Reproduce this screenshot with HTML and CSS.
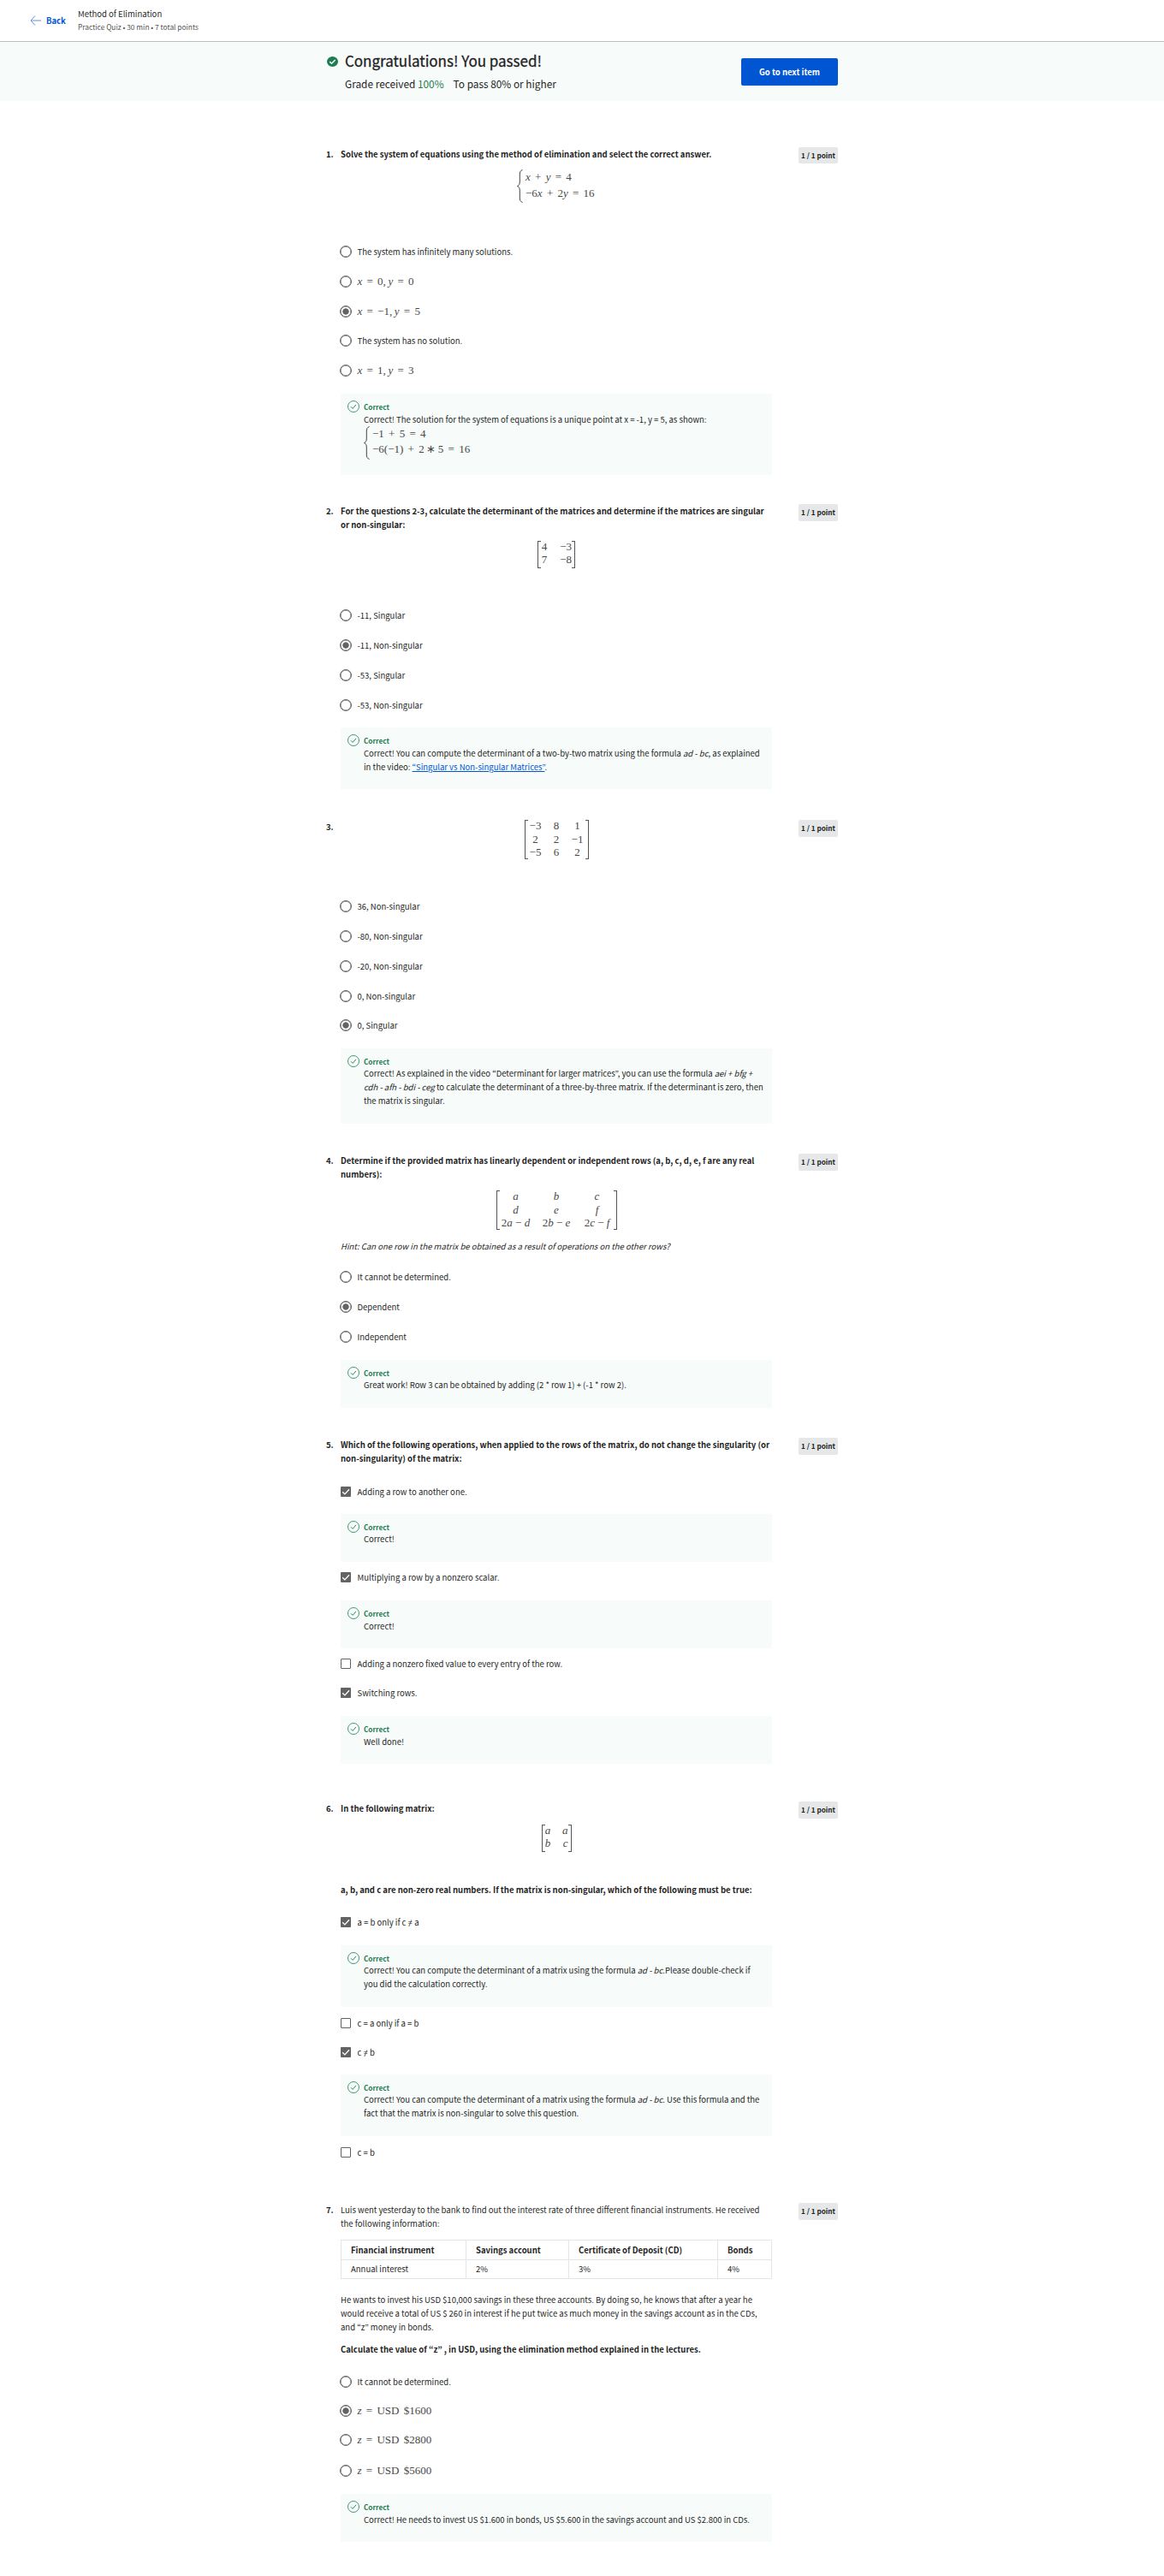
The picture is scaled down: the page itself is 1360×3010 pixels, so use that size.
FILE: index.html
```html
<!DOCTYPE html>
<html lang="en">
<head>
<meta charset="utf-8">
<title>Method of Elimination</title>
<link rel="stylesheet" href="styles.css">
</head>
<body>
<svg class="defs" width="0" height="0" aria-hidden="true">
  <symbol id="ok" viewBox="0 0 14 14"><circle cx="7" cy="7" r="6.5" fill="none" stroke="#1d7c50" stroke-width=".8"/><path d="M4 7.3l2.1 2.1L10 4.9" fill="none" stroke="#1d7c50" stroke-width=".9"/></symbol>
  <symbol id="brace" viewBox="0 0 7 39"><path d="M6.500.5C4 1.500 3.300 3 3.300 6v8c0 3-.5 4.500-2.800 5.500 2.300 1 2.800 2.500 2.800 5.500v8c0 3 .7 4.500 3.200 5.500" fill="none" stroke="#444" stroke-width="1"/></symbol>
  <symbol id="tick" viewBox="0 0 12 12"><path d="M2.200 6.200l2.700 2.700L10 3.200" fill="none" stroke="#fff" stroke-width="1.300"/></symbol>
</svg>

<header class="topbar">
  <a class="back"><svg width="13" height="12" viewBox="0 0 13 12"><path d="M6 .5L1 6l5 5.500M1 6h12" fill="none" stroke="#5b92e4" stroke-width="1"/></svg>Back</a>
  <div class="heading">
    <div class="name">Method of Elimination</div>
    <div class="meta">Practice Quiz • 30 min • 7 total points</div>
  </div>
</header>

<section class="banner">
  <div class="banner-inner">
    <svg class="passed" width="13" height="12" viewBox="0 0 13 12"><ellipse cx="6.500" cy="6" rx="6.500" ry="6" fill="#1d7c50"/><path d="M3.300 6.100l2.200 2.100 4.200-4.300" fill="none" stroke="#fff" stroke-width="1.500"/></svg>
    <div class="result">
      <h1>Congratulations! You passed!</h1>
      <p><span>Grade received <b class="grade">100%</b></span><span>To pass 80% or higher</span></p>
    </div>
    <button class="next">Go to next item</button>
  </div>
</section>

<main>
<section class="question q1">
  <div class="num">1.</div>
  <div class="body">
    <p class="prompt">Solve the system of equations using the method of elimination and select the correct answer.</p>
    <div class="cases"><svg width="7" height="39"><use href="#brace"/></svg><div class="math"><div><i>x</i> + <i>y</i> = 4</div><div>−6<i>x</i> + 2<i>y</i> = 16</div></div></div>
    <div class="options">
      <div class="option"><span class="radio"></span>The system has infinitely many solutions.</div>
      <div class="option"><span class="radio"></span><span class="math"><i>x</i> = 0,&thinsp;<i>y</i> = 0</span></div>
      <div class="option"><span class="radio on"></span><span class="math"><i>x</i> = −1,&thinsp;<i>y</i> = 5</span></div>
      <div class="option"><span class="radio"></span>The system has no solution.</div>
      <div class="option"><span class="radio"></span><span class="math"><i>x</i> = 1,&thinsp;<i>y</i> = 3</span></div>
    </div>
    <div class="feedback loose">
      <svg class="ok" width="14" height="14"><use href="#ok"/></svg>
      <div><h4>Correct</h4>
      <p>Correct! The solution for the system of equations is a unique point at x = -1, y = 5, as shown:</p>
      <div class="cases"><svg width="7" height="39"><use href="#brace"/></svg><div class="math"><div>−1 + 5 = 4</div><div>−6(−1) + 2&thinsp;∗&thinsp;5 = 16</div></div></div></div>
    </div>
  </div>
  <div class="points">1 / 1 point</div>
</section>

<section class="question q2">
  <div class="num">2.</div>
  <div class="body">
    <p class="prompt">For the questions 2-3, calculate the determinant of the matrices and determine if the matrices are singular<br>or non-singular:</p>
    <div class="matrix m2"><span>4</span><span>−3</span><span>7</span><span>−8</span></div>
    <div class="options">
      <div class="option"><span class="radio"></span>-11, Singular</div>
      <div class="option"><span class="radio on"></span>-11, Non-singular</div>
      <div class="option"><span class="radio"></span>-53, Singular</div>
      <div class="option"><span class="radio"></span>-53, Non-singular</div>
    </div>
    <div class="feedback loose">
      <svg class="ok" width="14" height="14"><use href="#ok"/></svg>
      <div><h4>Correct</h4>
      <p>Correct! You can compute the determinant of a two-by-two matrix using the formula <em>ad - bc</em>, as explained<br>in the video: <a class="link">“Singular vs Non-singular Matrices”</a>.</p></div>
    </div>
  </div>
  <div class="points">1 / 1 point</div>
</section>

<section class="question q3">
  <div class="num">3.</div>
  <div class="body">
    <div class="matrix m3"><span>−3</span><span>8</span><span>1</span><span>2</span><span>2</span><span>−1</span><span>−5</span><span>6</span><span>2</span></div>
    <div class="options">
      <div class="option"><span class="radio"></span>36, Non-singular</div>
      <div class="option"><span class="radio"></span>-80, Non-singular</div>
      <div class="option"><span class="radio"></span>-20, Non-singular</div>
      <div class="option"><span class="radio"></span>0, Non-singular</div>
      <div class="option"><span class="radio on"></span>0, Singular</div>
    </div>
    <div class="feedback">
      <svg class="ok" width="14" height="14"><use href="#ok"/></svg>
      <div><h4>Correct</h4>
      <p>Correct! As explained in the video “Determinant for larger matrices”, you can use the formula <em>aei + bfg +<br>cdh - afh - bdi - ceg</em> to calculate the determinant of a three-by-three matrix. If the determinant is zero, then<br>the matrix is singular.</p></div>
    </div>
  </div>
  <div class="points">1 / 1 point</div>
</section>

<section class="question q4">
  <div class="num">4.</div>
  <div class="body">
    <p class="prompt">Determine if the provided matrix has linearly dependent or independent rows (a, b, c, d, e, f are any real<br>numbers):</p>
    <div class="matrix m4"><i>a</i><i>b</i><i>c</i><i>d</i><i>e</i><i>f</i><span>2<i>a</i> − <i>d</i></span><span>2<i>b</i> − <i>e</i></span><span>2<i>c</i> − <i>f</i></span></div>
    <p class="hint"><em>Hint: Can one row in the matrix be obtained as a result of operations on the other rows?</em></p>
    <div class="options">
      <div class="option"><span class="radio"></span>It cannot be determined.</div>
      <div class="option"><span class="radio on"></span>Dependent</div>
      <div class="option"><span class="radio"></span>Independent</div>
    </div>
    <div class="feedback">
      <svg class="ok" width="14" height="14"><use href="#ok"/></svg>
      <div><h4>Correct</h4><p>Great work! Row 3 can be obtained by adding (2 * row 1) + (-1 * row 2).</p></div>
    </div>
  </div>
  <div class="points">1 / 1 point</div>
</section>

<section class="question q5">
  <div class="num">5.</div>
  <div class="body">
    <p class="prompt">Which of the following operations, when applied to the rows of the matrix, do not change the singularity (or<br>non-singularity) of the matrix:</p>
    <div class="options">
      <div class="option"><span class="box on"><svg width="12" height="12"><use href="#tick"/></svg></span>Adding a row to another one.</div>
      <div class="feedback">
        <svg class="ok" width="14" height="14"><use href="#ok"/></svg>
        <div><h4>Correct</h4><p>Correct!</p></div>
      </div>
      <div class="option"><span class="box on"><svg width="12" height="12"><use href="#tick"/></svg></span>Multiplying a row by a nonzero scalar.</div>
      <div class="feedback loose">
        <svg class="ok" width="14" height="14"><use href="#ok"/></svg>
        <div><h4>Correct</h4><p>Correct!</p></div>
      </div>
      <div class="option"><span class="box"></span>Adding a nonzero fixed value to every entry of the row.</div>
      <div class="option"><span class="box on"><svg width="12" height="12"><use href="#tick"/></svg></span>Switching rows.</div>
      <div class="feedback loose">
        <svg class="ok" width="14" height="14"><use href="#ok"/></svg>
        <div><h4>Correct</h4><p>Well done!</p></div>
      </div>
    </div>
  </div>
  <div class="points">1 / 1 point</div>
</section>

<section class="question q6">
  <div class="num">6.</div>
  <div class="body">
    <p class="prompt">In the following matrix:</p>
    <div class="matrix m6"><i>a</i><i>a</i><i>b</i><i>c</i></div>
    <p class="prompt">a, b, and c are non-zero real numbers. If the matrix is non-singular, which of the following must be true:</p>
    <div class="options">
      <div class="option"><span class="box on"><svg width="12" height="12"><use href="#tick"/></svg></span><span>a = b only if c <span class="ne">≠</span> a</span></div>
      <div class="feedback">
        <svg class="ok" width="14" height="14"><use href="#ok"/></svg>
        <div><h4>Correct</h4><p>Correct! You can compute the determinant of a matrix using the formula <em>ad - bc</em>.Please double-check if<br>you did the calculation correctly.</p></div>
      </div>
      <div class="option short"><span class="box"></span>c = a only if a = b</div>
      <div class="option short"><span class="box on"><svg width="12" height="12"><use href="#tick"/></svg></span><span>c <span class="ne">≠</span> b</span></div>
      <div class="feedback">
        <svg class="ok" width="14" height="14"><use href="#ok"/></svg>
        <div><h4>Correct</h4><p>Correct! You can compute the determinant of a matrix using the formula <em>ad - bc</em>. Use this formula and the<br>fact that the matrix is non-singular to solve this question.</p></div>
      </div>
      <div class="option"><span class="box"></span>c = b</div>
    </div>
  </div>
  <div class="points">1 / 1 point</div>
</section>

<section class="question q7">
  <div class="num">7.</div>
  <div class="body">
    <p>Luis went yesterday to the bank to find out the interest rate of three different financial instruments. He received<br>the following information:</p>
    <table>
      <tr><th class="c1">Financial instrument</th><th class="c2">Savings account</th><th class="c3">Certificate of Deposit (CD)</th><th>Bonds</th></tr>
      <tr><td>Annual interest</td><td>2%</td><td>3%</td><td>4%</td></tr>
    </table>
    <p>He wants to invest his USD $10,000 savings in these three accounts. By doing so, he knows that after a year he<br>would receive a total of US $ 260 in interest if he put twice as much money in the savings account as in the CDs,<br>and “z” money in bonds.</p>
    <p class="prompt ask">Calculate the value of “z” , in USD, using the elimination method explained in the lectures.</p>
    <div class="options">
      <div class="option"><span class="radio"></span>It cannot be determined.</div>
      <div class="option"><span class="radio on"></span><span class="math"><i>z</i> = USD $1600</span></div>
      <div class="option"><span class="radio"></span><span class="math"><i>z</i> = USD $2800</span></div>
      <div class="option"><span class="radio"></span><span class="math"><i>z</i> = USD $5600</span></div>
    </div>
    <div class="feedback loose">
      <svg class="ok" width="14" height="14"><use href="#ok"/></svg>
      <div><h4>Correct</h4><p>Correct! He needs to invest US $1.600 in bonds, US $5.600 in the savings account and US $2.800 in CDs.</p></div>
    </div>
  </div>
  <div class="points">1 / 1 point</div>
</section>
</main>
</body>
</html>
```
FILE: styles.css
```css
* { box-sizing: border-box; }
body {
  margin: 0;
  width: 1360px;
  height: 3010px;
  overflow: hidden;
  background: #fff;
  color: #1f1f1f;
  font: 9.53px/16px "Noto Sans CJK KR", sans-serif;
  white-space: nowrap;
}
p, h1, h4 { margin: 0; font-size: inherit; }
svg { display: block; flex: none; }
.defs { display: none; }

/* Top bar */
.topbar {
  display: flex;
  height: 49px;
  padding-left: 35px;
  border-bottom: 1px solid #bdbdbd;
}
.back {
  display: flex;
  align-items: center;
  gap: 6px;
  width: 56px;
  height: 47px;
  color: #0056d2;
  font-weight: 700;
}
.heading { padding-top: 8px; }
.meta { margin-top: -1px; font-size: 8.35px; color: #555; }

/* Result banner */
.banner { height: 69px; background: #f7fbfa; }
.banner-inner {
  display: flex;
  width: 597px;
  margin-left: 382px;
  padding-top: 8px;
}
.passed { margin-top: 9px; }
.result { flex: 1; padding-left: 8px; }
.result h1 {
  font-size: 16.98px;
  line-height: 28px;
  font-weight: 400;
  -webkit-text-stroke: .3px #1f1f1f;
}
.result p {
  display: flex;
  gap: 11px;
  padding-top: 4px;
  font-size: 11.85px;
  line-height: 18px;
}
.grade { font-weight: 400; color: #1d7c50; }
.next {
  width: 113px;
  height: 32px;
  margin-top: 11px;
  padding: 0;
  border: 0;
  border-radius: 2px;
  background: #0056d2;
  color: #fff;
  font: 700 9.53px/32px "Noto Sans CJK KR", sans-serif;
}

/* Questions */
main { padding: 54px 0 0 381px; }
.question { display: flex; width: 598px; }
.q1 { height: 417px; }
.q2 { height: 369px; }
.q3 { height: 390px; }
.q4 { height: 332px; }
.q5 { height: 425px; }
.q6 { height: 469px; }
.q7 { height: 436px; }
.num { width: 17px; font-weight: 700; }
.body { width: 504px; }
.prompt { font-weight: 700; }
.points {
  width: 46px;
  height: 20px;
  margin-left: 31px;
  border-radius: 2px;
  background: #e5e7e8;
  font-size: 8.19px;
  line-height: 20px;
  font-weight: 700;
  text-align: center;
}
.q1 .points { height: 19px; }

/* Formulas */
.math, .matrix {
  font-family: "Liberation Serif", serif;
  font-size: 13px;
  color: #484848;
  word-spacing: 2px;
}
.cases { display: flex; gap: 3px; line-height: 18.5px; }
.q1 .body > .cases { width: 92px; margin: 10px 0 0 206px; }
.matrix {
  display: grid;
  grid-auto-rows: 15.5px;
  width: max-content;
  margin-left: auto;
  margin-right: auto;
  text-align: center;
  line-height: 13px;
  padding: 0 4px;
  background:
    linear-gradient(#555, #555) 0 0 / 4px 1px,
    linear-gradient(#555, #555) 0 100% / 4px 1px,
    linear-gradient(#555, #555) 0 0 / 1px 100%,
    linear-gradient(#555, #555) 100% 0 / 4px 1px,
    linear-gradient(#555, #555) 100% 100% / 4px 1px,
    linear-gradient(#555, #555) 100% 0 / 1px 100%;
  background-repeat: no-repeat;
}
.m2 { grid-template-columns: 8px 28px; grid-auto-rows: 14.5px; height: 32px; margin-top: 11px; }
.m2 span:nth-child(even), .m6 i:nth-child(even) { text-align: right; }
.m3 { grid-template-columns: 18px 31px 18px; justify-content: space-between; width: 75px; height: 46px; }
.m4 { grid-template-columns: 38px 36px 38px; justify-content: space-between; width: 141px; height: 46px; margin-top: 11px; word-spacing: 0; }
.m6 { grid-template-columns: 7px 20px; grid-auto-rows: 14.5px; height: 32px; margin-top: 11px; }
.q6 .matrix + .prompt { margin-top: 36px; }
.hint { margin-top: 10.5px; }

/* Answer options */
.q1 .options { margin-top: 39.5px; }
.q2 .options { margin-top: 38px; }
.q3 .options { margin-top: 38px; }
.q4 .options { margin-top: 11.5px; }
.q5 .options { margin-top: 13.5px; }
.q6 .options { margin-top: 13px; }
.q7 .options { margin-top: 13px; }
.option {
  display: flex;
  align-items: center;
  height: 34.85px;
}
.q2 .option, .q3 .option { height: 34.75px; }
.option.short { height: 34px; }
.q7 .option:nth-child(-n+3) { height: 34px; }
.q7 .option:last-child { height: 37.3px; }
.radio {
  width: 14px;
  height: 14px;
  margin: 0 6.5px 0 -1px;
  border: 1px solid #636363;
  border-radius: 50%;
  box-shadow: inset 0 0 0 .5px #636363;
}
.radio.on { background: radial-gradient(circle, #636363 3.3px, #fff 4px); }
.box {
  width: 12px;
  height: 12px;
  margin-right: 7.5px;
  border: 1px solid #636363;
  border-radius: 1px;
}
.box.on { border: 0; background: #636363; }
.ne { font-family: "Noto Sans", sans-serif; line-height: 1; }

/* Feedback */
.feedback {
  display: flex;
  gap: 5px;
  margin-top: 9px;
  padding: 7px 0 19px 8px;
  background: #f7fbfa;
}
.feedback .ok { margin-top: 1px; }
.feedback h4 { height: 14px; font-size: 8.2px; font-weight: 700; color: #1d7c50; }
.feedback.loose { padding-bottom: 18px; }
.feedback.loose h4 { height: 15px; }
.q1 .feedback { height: 95px; }
.q5 .feedback { margin-bottom: .5px; }
.q6 .feedback { margin-bottom: 2px; }
.link { color: #0056d2; text-decoration: underline; }

/* Rates table */
table {
  width: 504px;
  margin: 11px 0 16px;
  border-collapse: collapse;
  table-layout: fixed;
}
th, td {
  height: 22.5px;
  padding: 0 11px;
  border: 1px solid #e3e5e6;
  text-align: left;
  line-height: 16px;
}
.c1 { width: 146px; }
.c2 { width: 120px; }
.c3 { width: 174px; }
.ask { margin-top: 10px; }
```
